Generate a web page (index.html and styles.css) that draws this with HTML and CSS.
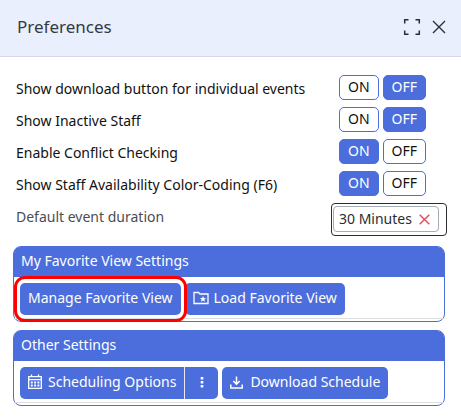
FILE: index.html
```html
<!DOCTYPE html>
<html lang="en">
<head>
    <meta charset="UTF-8">
    <meta name="viewport" content="width=device-width, initial-scale=1.0">
    <title>Preferences</title>
    <link rel="stylesheet" href="styles.css">
</head>
<body>
    <header class="panel-header">
        <h1>Preferences</h1>
        <div class="header-actions">
            <button type="button" class="icon-btn" aria-label="Full screen">
                <svg width="18" height="18" viewBox="0 0 18 18" fill="none" stroke="#2b3038" stroke-width="1.5"><path d="M1.7 5.5V1.7H5.5M12.5 1.7H16.3V5.5M16.3 12.5V16.3H12.5M5.5 16.3H1.7V12.5"/></svg>
            </button>
            <button type="button" class="icon-btn" aria-label="Close">
                <svg width="14" height="14" viewBox="0 0 14 14" fill="none" stroke="#2b3038" stroke-width="1.4"><path d="M1 1L13 13M13 1L1 13"/></svg>
            </button>
        </div>
    </header>

    <main class="panel-body">
        <div class="pref-row">
            <span class="pref-label" id="download-label">Show download button for individual events</span>
            <div class="toggle" role="group" aria-labelledby="download-label">
                <button type="button">ON</button>
                <button type="button" class="active">OFF</button>
            </div>
        </div>
        <div class="pref-row">
            <span class="pref-label" id="inactive-label">Show Inactive Staff</span>
            <div class="toggle" role="group" aria-labelledby="inactive-label">
                <button type="button">ON</button>
                <button type="button" class="active">OFF</button>
            </div>
        </div>
        <div class="pref-row">
            <span class="pref-label" id="conflict-label">Enable Conflict Checking</span>
            <div class="toggle" role="group" aria-labelledby="conflict-label">
                <button type="button" class="active">ON</button>
                <button type="button">OFF</button>
            </div>
        </div>
        <div class="pref-row">
            <span class="pref-label" id="color-label">Show Staff Availability Color-Coding (F6)</span>
            <div class="toggle" role="group" aria-labelledby="color-label">
                <button type="button" class="active">ON</button>
                <button type="button">OFF</button>
            </div>
        </div>
        <div class="pref-row duration-row">
            <span class="pref-label muted" id="duration-label">Default event duration</span>
            <div class="duration-box" role="group" aria-labelledby="duration-label">
                <span class="chip">
                    30 Minutes
                    <button type="button" class="icon-btn" aria-label="Clear duration">
                        <svg width="11" height="11" viewBox="0 0 11 11" fill="none" stroke="#e5485a" stroke-width="1.4"><path d="M.7.7L10.3 10.3M10.3.7L.7 10.3"/></svg>
                    </button>
                </span>
            </div>
        </div>

        <section class="card">
            <h2>My Favorite View Settings</h2>
            <div class="card-body">
                <button type="button" class="btn highlighted">Manage Favorite View</button>
                <button type="button" class="btn load-btn">
                    <svg width="16" height="14" viewBox="0 0 16 14" fill="none" stroke="#fff" stroke-width="1.3"><path d="M1 12.5V1.5H5.5L7 3H15V12.5Z"/><path d="M10 5l.9 2 2.2.2-1.7 1.4.6 2.1-2-1.1-2 1.1.6-2.1-1.7-1.4 2.2-.2z" fill="#fff" stroke="none"/></svg>
                    Load Favorite View
                </button>
            </div>
        </section>

        <section class="card">
            <h2>Other Settings</h2>
            <div class="card-body">
                <div class="split-btn">
                    <button type="button" class="btn options-btn">
                        <svg width="14" height="16" viewBox="0 0 14 16" fill="none" stroke="#fff" stroke-width="1.3"><path d="M.7 2.7H13.3V14.3H.7ZM.7 5.6H13.3M3.5.5V3M10.5.5V3"/><path d="M2.8 8.6H11.4M2.8 11.6H11.4" stroke-width="2" stroke-dasharray="2 1.3"/></svg>
                        Scheduling Options
                    </button>
                    <button type="button" class="btn more-btn" aria-label="More scheduling options">
                        <svg width="4" height="12" viewBox="0 0 4 12" fill="#fff"><path d="M.7 1h2.6v2.4H.7zM.7 5h2.6v2.4H.7zM.7 9h2.6v2.4H.7z"/></svg>
                    </button>
                </div>
                <button type="button" class="btn download-btn">
                    <svg width="13" height="13" viewBox="0 0 13 13" fill="none" stroke="#fff" stroke-width="1.5"><path d="M6.5.5V8M3.3 5L6.5 8.2 9.7 5M.8 8.5V12H12.2V8.5"/></svg>
                    Download Schedule
                </button>
            </div>
        </section>
    </main>
</body>
</html>
```
FILE: styles.css
```css
* {
    box-sizing: border-box;
}
body {
    margin: 0;
    background-color: #fff;
    color: #111;
    font-family: "Noto Sans", "Open Sans", sans-serif;
    font-size: 14px;
    line-height: 20px;
}
button {
    font: inherit;
    cursor: pointer;
}
svg {
    display: block;
    flex: none;
}
.panel-header {
    display: flex;
    justify-content: space-between;
    align-items: center;
    height: 57px;
    padding: 0 15px 3px 17px;
    background-color: #e9effd;
    border-bottom: 1px solid #d5dae5;
}
h1 {
    margin: 0;
    color: #343a43;
    font-size: 17px;
    font-weight: 400;
    line-height: 24px;
}
.header-actions {
    display: flex;
    align-items: center;
    gap: 11px;
}
.icon-btn {
    padding: 0;
    background: none;
    border: none;
}
.panel-body {
    padding: 18px 16px 14px 13px;
}
.pref-row {
    display: flex;
    justify-content: space-between;
    align-items: flex-start;
    margin-bottom: 7px;
    padding-left: 3px;
}
.pref-label {
    padding-top: 4px;
    white-space: nowrap;
}
.muted {
    color: #4a4d52;
}
.toggle {
    display: flex;
    gap: 4px;
    width: 106px;
}
.toggle button {
    height: 25px;
    padding: 0 8px 2px;
    background-color: #fff;
    border: 1px solid #4b6edc;
    border-radius: 5px;
    color: #111;
    line-height: 20px;
}
.toggle .active {
    background-color: #4b6edc;
    color: #fff;
}
.duration-row {
    margin-right: -2px;
    margin-bottom: 10px;
}
.duration-box {
    width: 116px;
    padding: 2px 1px 3px;
    border: 1px solid #2b2d33;
    border-radius: 4px;
}
.chip {
    display: flex;
    justify-content: space-between;
    align-items: center;
    width: 106px;
    height: 26px;
    padding: 0 8px 0 5px;
    border: 1px solid #a4acb8;
    border-radius: 4px;
    color: #2b2d33;
    white-space: nowrap;
}
.card {
    margin-bottom: 8px;
    border: 1px solid #4b6edc;
    border-radius: 8px;
}
h2 {
    margin: 0;
    padding: 4px 7px 6px;
    background-color: #4b6edc;
    border-radius: 6px 6px 0 0;
    color: #fff;
    font-size: 14px;
    font-weight: 400;
    line-height: 20px;
}
.card-body {
    display: flex;
    gap: 4px;
    margin-bottom: 2px;
    padding: 6px 6px 3px;
    border-bottom: 1px solid #dcdee2;
}
.btn {
    display: flex;
    align-items: center;
    height: 32px;
    padding: 0 8px 2px;
    background-color: #4b6edc;
    border: none;
    border-radius: 5px;
    color: #fff;
    white-space: nowrap;
}
.highlighted {
    position: relative;
}
.highlighted::after {
    content: "";
    position: absolute;
    inset: -7px -6px;
    border: 3px solid #f00;
    border-radius: 11px;
}
.load-btn {
    gap: 5px;
}
.split-btn {
    display: flex;
}
.options-btn {
    gap: 6px;
    border-radius: 5px 0 0 5px;
}
.more-btn {
    justify-content: center;
    width: 34px;
    border-left: 1px solid #e5e9f8;
    border-radius: 0 5px 5px 0;
}
.download-btn {
    gap: 7px;
}
```
